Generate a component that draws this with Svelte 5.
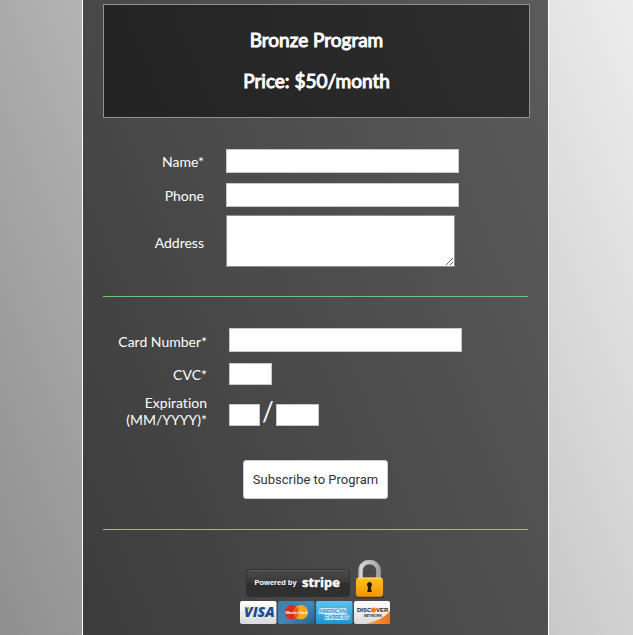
<script>
  const program = { name: 'Bronze Program', price: 'Price: $50/month' };
  let customer = $state({ name: '', phone: '', address: '' });
  let card = $state({ number: '', cvc: '', month: '', year: '' });

  function submit(event) {
    event.preventDefault();
  }
</script>

<div class="page">
  <main class="panel">
    <header class="summary">
      <h1>{program.name}</h1>
      <h2>{program.price}</h2>
    </header>

    <form onsubmit={submit}>
      <div class="fields contact">
        <label for="name">Name*</label>
        <input id="name" class="wide" type="text" bind:value={customer.name} />
        <label for="phone">Phone</label>
        <input id="phone" class="wide" type="tel" bind:value={customer.phone} />
        <label for="address">Address</label>
        <textarea id="address" bind:value={customer.address}></textarea>
      </div>

      <hr />

      <div class="fields payment">
        <label for="card">Card Number*</label>
        <input id="card" class="wide" type="text" bind:value={card.number} />
        <label for="cvc">CVC*</label>
        <input id="cvc" class="short" type="text" bind:value={card.cvc} />
        <label for="month">Expiration<br />(MM/YYYY)*</label>
        <div class="expiry">
          <input id="month" class="month" type="text" bind:value={card.month} />
          <span>/</span>
          <input class="short" type="text" aria-label="Expiration year" bind:value={card.year} />
        </div>
      </div>

      <button type="submit">Subscribe to Program</button>
    </form>

    <hr class="pale" />

    <svg class="badges" width="152" height="66" viewBox="0 0 152 66" role="img" aria-label="Powered by Stripe">
      <defs>
        <linearGradient id="dark" x2="0" y2="1">
          <stop offset="0" stop-color="#4b4b4b" /><stop offset=".48" stop-color="#393939" />
          <stop offset=".5" stop-color="#2e2e2e" /><stop offset="1" stop-color="#303030" />
        </linearGradient>
        <linearGradient id="gold" x2="0" y2="1">
          <stop offset="0" stop-color="#ffc21f" /><stop offset="1" stop-color="#ee9305" />
        </linearGradient>
        <linearGradient id="steel" gradientUnits="userSpaceOnUse" x1="118" x2="141">
          <stop offset="0" stop-color="#999" /><stop offset=".1" stop-color="#d5d5d5" />
          <stop offset=".7" stop-color="#b5b5b5" /><stop offset="1" stop-color="#999" />
        </linearGradient>
        <linearGradient id="paper" x2="0" y2="1">
          <stop offset="0" stop-color="#fff" /><stop offset="1" stop-color="#d9dadd" />
        </linearGradient>
        <linearGradient id="blue" x2="1" y2="1">
          <stop offset="0" stop-color="#397fab" /><stop offset=".5" stop-color="#4388b7" /><stop offset="1" stop-color="#23618d" />
        </linearGradient>
        <linearGradient id="sky" x2="0" y2="1">
          <stop offset="0" stop-color="#62c0ef" /><stop offset="1" stop-color="#1896d7" />
        </linearGradient>
        <linearGradient id="orange">
          <stop offset="0" stop-color="#f9a245" /><stop offset="1" stop-color="#f47216" />
        </linearGradient>
        <clipPath id="discover"><rect x="114" y="41" width="36" height="23" rx="2" /></clipPath>
      </defs>

      <rect x="6.500" y="9.500" width="103" height="27" rx="3" fill="url(#dark)" stroke="#303030" />
      <path d="M9 10.500H107" stroke="#666" stroke-width=".6" />
      <text x="14.500" y="25" class="powered">Powered by</text>
      <text x="62" y="27" class="stripe">stripe</text>

      <path d="M120.500 19V10.500a9 8.500 0 0 1 18 0V19" fill="none" stroke="#888" stroke-width="5" />
      <path d="M120.500 19V10.500a9 8.500 0 0 1 18 0V19" fill="none" stroke="url(#steel)" stroke-width="4" />
      <rect x="116" y="35" width="28" height="3" rx="1.500" fill="#333" />
      <rect x="116" y="17.500" width="27" height="19.500" rx="3" fill="url(#gold)" />
      <path d="M118 18.200H141" stroke="#ffe078" />
      <path d="M118 36.500H141" stroke="#c87a03" />
      <path d="M129.500 22a2.700 2.700 0 0 1 1.400 4.900l.8 5h-4.400l.8-5A2.700 2.700 0 0 1 129.500 22z" fill="#251c0b" />

      <rect x="0" y="41" width="36.500" height="23" rx="2" fill="url(#paper)" />
      <text x="4" y="57" class="visa">VISA</text>
      <path d="M4 46.700h4.700l2 5.500C9 49.500 7.500 48 4 46.700z" fill="#eea52c" />

      <rect x="38" y="41" width="36.500" height="23" rx="2" fill="url(#blue)" />
      <circle cx="51.800" cy="52.300" r="7.200" fill="#d92c27" />
      <circle cx="60.800" cy="52.300" r="7.200" fill="#f4a51d" />
      <path d="M56.300 46.700a7.200 7.200 0 0 1 0 11.200a7.200 7.200 0 0 1 0-11.200z" fill="#e65b20" />
      <text x="45.500" y="54" class="master">MasterCard</text>

      <rect x="76" y="41" width="36.500" height="23" rx="2" fill="url(#sky)" />
      <text x="79" y="52.500" class="amex">AMERICAN</text>
      <text x="85" y="58.800" class="amex">EXPRESS</text>

      <rect x="114" y="41" width="36" height="23" rx="2" fill="url(#paper)" />
      <path d="M150 51C145 57 137 61 126 64H150z" fill="url(#orange)" clip-path="url(#discover)" />
      <text x="117" y="52" class="disc">DISC</text>
      <circle cx="133.500" cy="50" r="2.500" fill="#f37b20" />
      <text x="136" y="52" class="disc">VER</text>
      <text x="124" y="56.500" class="network">NETWORK</text>
    </svg>
  </main>
</div>

<style>
  :global(body) {
    margin: 0;
  }

  .page {
    display: flex;
    min-height: 100vh;
    box-sizing: border-box;
    padding: 0 84px 0 82px;
    background: linear-gradient(67deg, #8f8f8f, #ededed);
    font-family: Lato, 'Liberation Sans', sans-serif;
    font-variant-ligatures: none;
    color: #fff;
  }

  .panel {
    flex: 1;
    min-width: 0;
    padding: 4px 20px 9px;
    border: solid #fff;
    border-width: 0 1px;
    background: rgba(0, 0, 0, 0.6);
    background-clip: padding-box;
  }

  .summary {
    display: flex;
    flex-direction: column;
    gap: 17px;
    margin-right: -2px;
    padding: 23px 0 24px;
    border: 1px solid #919191;
    background: rgba(0, 0, 0, 0.5);
    text-align: center;
  }

  h1,
  h2 {
    margin: 0;
    font-size: 19px;
    line-height: 24px;
    font-weight: 400;
    -webkit-text-stroke: 1px #fff;
  }

  .fields {
    display: grid;
    align-items: center;
    justify-items: start;
  }

  .contact {
    grid-template-columns: 101px 1fr;
    column-gap: 22px;
    margin: 31px 0 29px;
  }

  .payment {
    grid-template-columns: 104px 1fr;
    column-gap: 22px;
    row-gap: 9px;
    margin: 31px 0 32px;
  }

  label {
    justify-self: end;
    font-size: 14px;
    line-height: 17px;
    text-align: right;
    white-space: nowrap;
  }

  input,
  textarea {
    box-sizing: border-box;
    margin: 0;
    padding: 2px 4px;
    border: 1px solid #c8c8c8;
    border-radius: 0;
    background: #fff;
    font: 14px Lato, sans-serif;
  }

  .wide {
    width: 233px;
    height: 24px;
  }

  .contact .wide {
    margin-bottom: 10px;
  }

  .payment .wide {
    margin-bottom: 2px;
  }

  .contact label:not([for='address']) {
    margin-bottom: 10px;
  }

  textarea {
    display: block;
    width: 229px;
    height: 52px;
    margin-top: -2px;
    border-color: #8e8e8e;
    resize: both;
  }

  .short {
    width: 43px;
    height: 22px;
  }

  .month {
    width: 31px;
    height: 22px;
  }

  .expiry {
    display: flex;
    align-items: flex-end;
    align-self: end;
    padding-bottom: 2px;
  }

  .expiry span {
    width: 16px;
    font-size: 26px;
    line-height: 30px;
    text-align: center;
  }

  hr {
    height: 1px;
    margin: 0;
    border: 0;
    background: #72c379;
  }

  hr.pale {
    margin-top: 30px;
    background: #8dc096;
  }

  button {
    display: block;
    height: 39px;
    margin: 0 auto;
    padding: 0 9px;
    border: 1px solid #ccc;
    border-radius: 3px;
    background: #fff;
    color: #333;
    font: 13px Roboto, sans-serif;
  }

  .badges {
    display: block;
    margin: 30px auto 0;
  }

  text {
    font-family: 'Liberation Sans', sans-serif;
    font-weight: 700;
    fill: #fff;
  }

  .powered {
    font-size: 7.5px;
  }

  .stripe {
    font: 700 13px 'Open Sans', sans-serif;
    stroke: #fff;
    stroke-width: 0.4px;
  }

  .visa {
    font: italic 800 14px 'Open Sans', sans-serif;
    fill: #1d4a96;
  }

  .master {
    font-size: 4px;
    font-style: italic;
  }

  .amex {
    font-size: 5px;
    fill: #168bd0;
    stroke: #e6f6ff;
    stroke-width: 1.4px;
    paint-order: stroke;
  }

  .disc {
    font-size: 6px;
    fill: #222;
  }

  .network {
    font-size: 3.5px;
    fill: #333;
  }
</style>
